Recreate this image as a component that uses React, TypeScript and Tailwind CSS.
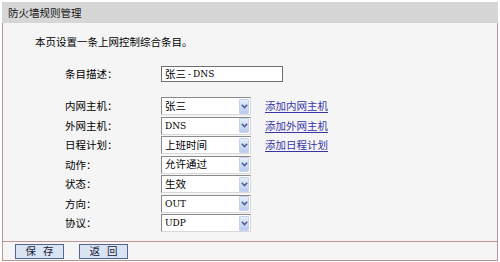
import React from "react";

const font = { fontFamily: '"Noto Sans CJK SC", "Liberation Serif", serif' } as const;
const latinFont = { fontFamily: '"DejaVu Serif Condensed", "DejaVu Serif", "Liberation Serif", serif' } as const;

function Arrow() {
  return (
    <div className="w-[10px] h-[15px] mr-[1px] flex items-center justify-center bg-gradient-to-b from-[#e6eefb] to-[#b9cbee] border border-[#c3d2ee] rounded-[1px]">
      <svg width="7" height="5" viewBox="0 0 7 5">
        <path d="M0.8 0.8 L3.5 3.6 L6.2 0.8" fill="none" stroke="#4a5f8f" strokeWidth="1.5" />
      </svg>
    </div>
  );
}

function Select({ value, latin }: { value: string; latin?: boolean }) {
  return (
    <div className="w-[90px] h-[18px] bg-white border-t border-l border-[#8a8a8a] border-r border-b border-r-[#d8d8d8] border-b-[#d8d8d8] flex items-center justify-between">
      <span
        className={latin ? "pl-[3px] text-[10px] leading-none text-black" : "pl-[3px] text-[10.5px] leading-none text-black"}
        style={latin ? latinFont : undefined}
      >
        {value}
      </span>
      <Arrow />
    </div>
  );
}

const rows: { label: string; value: string; latin?: boolean; link?: string }[] = [
  { label: "内网主机：", value: "张三", link: "添加内网主机" },
  { label: "外网主机：", value: "DNS", latin: true, link: "添加外网主机" },
  { label: "日程计划：", value: "上班时间", link: "添加日程计划" },
  { label: "动作：", value: "允许通过" },
  { label: "状态：", value: "生效" },
  { label: "方向：", value: "OUT", latin: true },
  { label: "协议：", value: "UDP", latin: true },
];

export default function App() {
  return (
    <div className="w-[500px] h-[262px] bg-white text-[10.5px] text-black overflow-hidden" style={font}>
      <div className="ml-[2px] pt-[2px] w-[496px]">
        <div className="h-[21px] bg-[#d6d6d6] pl-[6px] flex items-center text-[10.5px] text-[#111]">
          防火墙规则管理
        </div>
        <div className="h-[218px] bg-[#f5f5f5] border-l border-r border-[#b89494] flex flex-col">
          <div className="mt-[12px] ml-[32px] h-[14px] leading-[14px]">本页设置一条上网控制综合条目。</div>
          <div className="mt-[17px] flex items-center h-[16px]">
            <div className="ml-[62px] w-[96px]">条目描述：</div>
            <div className="w-[122px] h-[16px] bg-white border border-[#6f6f6f] flex items-center">
              <span className="pl-[3px] leading-none flex items-center">
                <span>张三</span>
                <span style={latinFont} className="text-[10px] px-[2px]">-</span>
                <span style={latinFont} className="text-[10px]">DNS</span>
              </span>
            </div>
          </div>
          <div className="mt-[15px] flex flex-col gap-[1.5px]">
            {rows.map((r) => (
              <div key={r.label} className="flex items-center h-[18px]">
                <div className="ml-[62px] w-[96px]">{r.label}</div>
                <Select value={r.value} latin={r.latin} />
                {r.link && (
                  <a className="ml-[14px] text-[#3535a8] underline underline-offset-2 cursor-pointer">{r.link}</a>
                )}
              </div>
            ))}
          </div>
        </div>
        <div className="h-[20px] bg-[#f5f5f5] border border-[#b89494] flex items-center gap-[15px] pl-[12px]">
          <button className="w-[49px] h-[15px] bg-[#d8e3f4] border border-[#55668a] text-[10.5px] leading-none text-[#1a1a3a] flex items-center justify-center gap-[7px]">
            <span>保</span>
            <span>存</span>
          </button>
          <button className="w-[49px] h-[15px] bg-[#d8e3f4] border border-[#55668a] text-[10.5px] leading-none text-[#1a1a3a] flex items-center justify-center gap-[7px]">
            <span>返</span>
            <span>回</span>
          </button>
        </div>
      </div>
    </div>
  );
}
